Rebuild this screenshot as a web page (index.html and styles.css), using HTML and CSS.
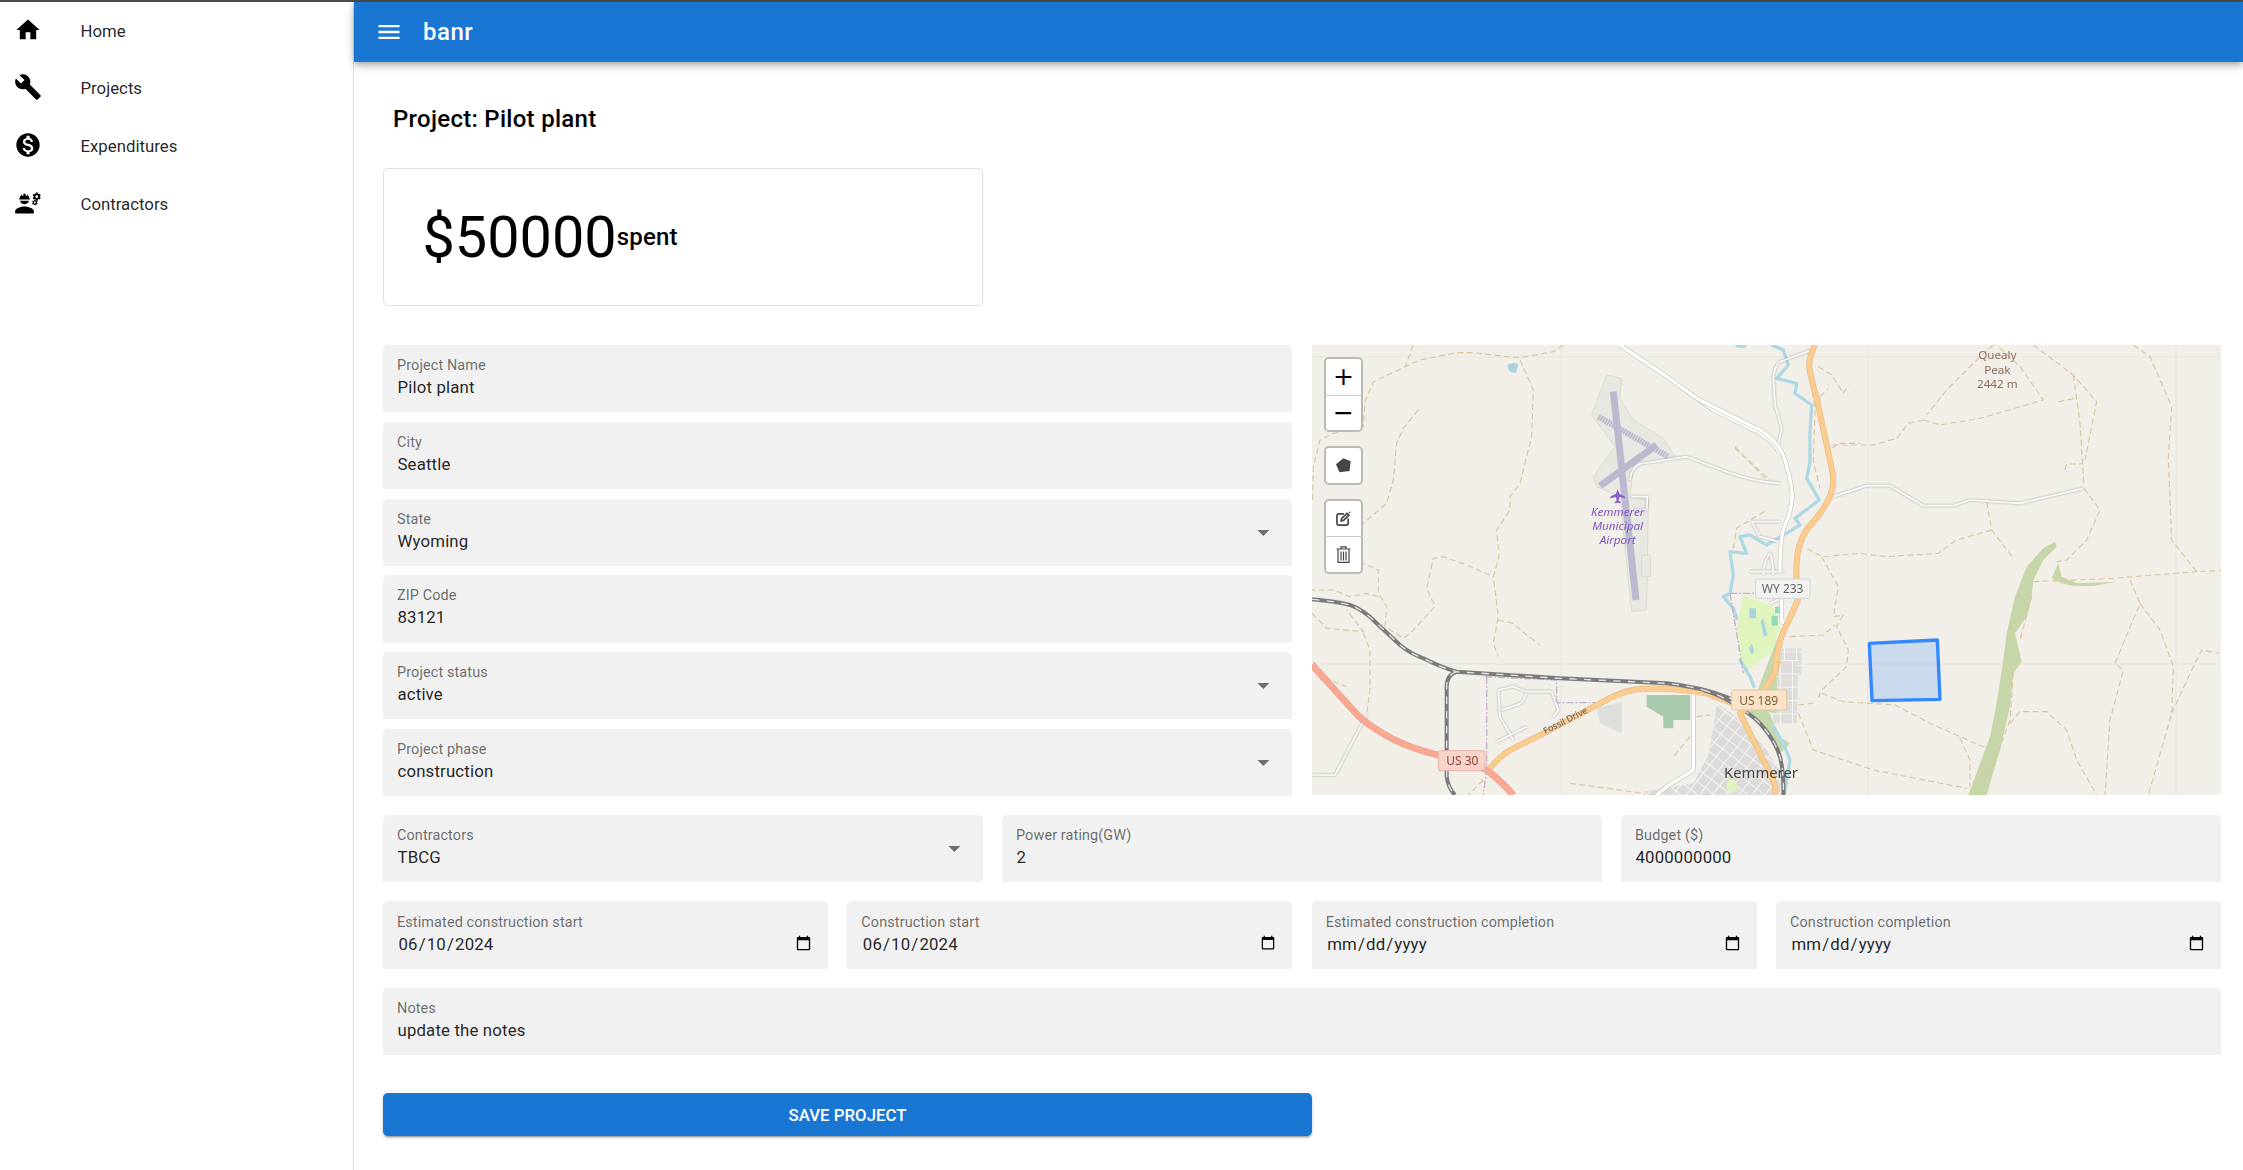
FILE: index.html
```html
<!DOCTYPE html>
<html lang="en">
<head>
<meta charset="utf-8">
<title>banr</title>
<link rel="stylesheet" href="styles.css">
</head>
<body>
<div class="app">
  <aside class="sidebar">
    <nav class="nav">
      <a class="nav-item"><svg class="icon" viewBox="0 0 24 24"><path d="M10 20v-6h4v6h5v-8h3L12 3 2 12h3v8z"/></svg><span>Home</span></a>
      <a class="nav-item"><svg class="icon" viewBox="0 0 24 24"><path d="M22.7 19l-9.1-9.1c.9-2.3.4-5-1.5-6.9-2-2-5-2.4-7.4-1.3L9 6 6 9 1.6 4.7C.4 7.1.9 10.1 2.9 12.1c1.9 1.9 4.6 2.4 6.9 1.5l9.1 9.1c.4.4 1 .4 1.4 0l2.3-2.3c.5-.4.5-1.1.1-1.4z"/></svg><span>Projects</span></a>
      <a class="nav-item"><svg class="icon" viewBox="0 0 24 24"><path d="M12 2C6.48 2 2 6.48 2 12s4.48 10 10 10 10-4.48 10-10S17.52 2 12 2zm1.41 16.09V20h-2.67v-1.93c-1.71-.36-3.16-1.46-3.27-3.4h1.96c.1 1.05.82 1.87 2.65 1.87 1.96 0 2.4-.98 2.4-1.59 0-.83-.44-1.61-2.67-2.14-2.48-.6-4.18-1.62-4.18-3.67 0-1.72 1.39-2.84 3.11-3.21V4h2.67v1.95c1.86.45 2.79 1.86 2.85 3.39H14.3c-.05-1.11-.64-1.87-2.22-1.87-1.5 0-2.4.68-2.4 1.64 0 .84.65 1.39 2.67 1.91s4.18 1.39 4.18 3.91c-.01 1.83-1.38 2.83-3.12 3.16z"/></svg><span>Expenditures</span></a>
      <a class="nav-item"><svg class="icon" viewBox="0 0 24 24"><path d="M9 15c-2.67 0-8 1.34-8 4v2h16v-2c0-2.66-5.33-4-8-4z"/><path d="M4.74 9h8.53c.27 0 .49-.22.49-.49v-.02c0-.27-.22-.49-.49-.49H13c0-1.48-.81-2.75-2-3.45v.95c0 .28-.22.5-.5.5s-.5-.22-.5-.5V4.14C9.68 4.06 9.35 4 9 4s-.68.06-1 .14V5.5c0 .28-.22.5-.5.5S7 5.78 7 5.5v-.95C5.81 5.25 5 6.52 5 8h-.26c-.27 0-.49.22-.49.49v.03c0 .26.22.48.49.48zM9 13c1.86 0 3.41-1.28 3.86-3H5.14c.45 1.72 2 3 3.86 3z"/><path id="gear" d="M22.1 6.84c.01-.11.02-.22.02-.34 0-.12-.01-.23-.03-.34l.74-.58c.07-.05.08-.15.04-.22l-.7-1.21c-.04-.08-.14-.1-.21-.08l-.86.35c-.18-.14-.38-.25-.59-.34l-.13-.93c-.02-.08-.09-.15-.18-.15h-1.4c-.09 0-.16.07-.17.15l-.13.93c-.21.09-.41.21-.59.34l-.87-.35c-.08-.03-.17 0-.21.08l-.7 1.21c-.04.08-.03.17.04.22l.74.58c-.02.11-.03.23-.03.34 0 .11.01.23.03.34l-.74.58c-.07.05-.08.15-.04.22l.7 1.21c.04.08.14.1.21.08l.87-.35c.18.14.38.25.59.34l.13.93c.01.08.08.15.17.15h1.4c.09 0 .16-.07.17-.15l.13-.93c.21-.09.41-.21.59-.34l.87.35c.08.03.17 0 .21-.08l.7-1.21c.04-.08.03-.17-.04-.22l-.73-.58zm-2.6.91c-.69 0-1.25-.56-1.25-1.25s.56-1.25 1.25-1.25 1.25.56 1.25 1.25-.56 1.25-1.25 1.25z"/><use href="#gear" transform="translate(4.6 7.2) scale(.68)"/></svg><span>Contractors</span></a>
    </nav>
  </aside>
  <div class="page">
    <header class="topbar">
      <svg class="icon icon-menu" viewBox="0 0 24 24"><path d="M3 18h18v-2H3v2zm0-5h18v-2H3v2zm0-7v2h18V6H3z"/></svg>
      <div class="brand">banr</div>
    </header>
    <main class="content">
      <h1 class="title">Project: Pilot plant</h1>
      <section class="spent-card">
        <span class="spent-amount">$50000</span><span class="spent-label">spent</span>
      </section>
      <form class="form">
        <div class="split">
          <div class="stack">
            <label class="field"><span class="field-body"><span class="field-label">Project Name</span><input class="field-input" value="Pilot plant"></span></label>
            <label class="field"><span class="field-body"><span class="field-label">City</span><input class="field-input" value="Seattle"></span></label>
            <div class="field"><span class="field-body"><span class="field-label">State</span><span class="field-value">Wyoming</span></span><svg class="arrow" viewBox="0 0 24 24"><path d="M7 10l5 5 5-5z"/></svg></div>
            <label class="field"><span class="field-body"><span class="field-label">ZIP Code</span><input class="field-input" value="83121"></span></label>
            <div class="field"><span class="field-body"><span class="field-label">Project status</span><span class="field-value">active</span></span><svg class="arrow" viewBox="0 0 24 24"><path d="M7 10l5 5 5-5z"/></svg></div>
            <div class="field"><span class="field-body"><span class="field-label">Project phase</span><span class="field-value">construction</span></span><svg class="arrow" viewBox="0 0 24 24"><path d="M7 10l5 5 5-5z"/></svg></div>
          </div>
          <div class="map">
            <svg class="map-art" viewBox="0 0 909 450" width="909" height="450">
              <defs>
                <pattern id="grid1" width="31" height="31" patternUnits="userSpaceOnUse" patternTransform="rotate(38)"><rect width="31" height="31" fill="#dcdbd9"/><path d="M0 0H31M0 0V31" class="grid-line"/></pattern>
                <pattern id="grid2" width="36" height="40" patternUnits="userSpaceOnUse"><rect width="36" height="40" fill="#dedddb"/><path d="M0 0H36M0 0V40" class="grid-line"/></pattern>
              </defs>
              <rect width="909" height="450" class="m-bg"/>
              <path class="m-seam" d="M249 0V450M556 0V450M864 0V450M0 12H909M0 319H909"/>
              <g transform="translate(388 0) scale(.33333)">
                <path class="m-park" d="M130 750L220 785L240 850L215 920L130 985L110 850Z"/>
                <path class="m-green2" d="M225 785h15v20h-15zM215 812h18v30h-18z"/>
                <path class="m-grid2" d="M240 910H305V990H225Z"/>
                <path class="m-water-a" d="M148 790h20v30h-20zM190 820l12 50-10 5-10-45zM155 895l8 25-8 10-8-20z"/>
              </g>
              <g transform="translate(348 315) scale(.33333)">
                <path class="m-green3" d="M250 130L320 140L360 230L390 250L360 280L300 190Z"/>
                <path class="m-grid1" d="M170 130L230 170L320 270L370 350L365 405H-50V395L100 370L145 285L160 200Z"/>
                <path class="m-grid2" d="M340 0H415L410 190H340Z"/>
                <ellipse class="m-park" cx="215" cy="378" rx="16" ry="20"/>
              </g>
              <g transform="translate(-12 -5) scale(.33333)">
                <path class="m-forest" d="M1040 1065H1170V1140H1120V1165H1090V1130L1040 1100Z"/>
                <path class="m-gray" d="M890 1105L965 1085V1180L900 1150Z"/>
                <path class="m-water-a" d="M622 75Q640 65 655 72L648 98Q625 102 622 75Z"/>
                <path class="m-green3" d="M1430 900L1430 1120L1350 1110Z"/>
                <path class="m-air" d="M920 105L965 115L960 175L1000 240L1090 295L1125 350L1000 380L990 470L1045 480L1040 810L995 815L975 620L960 470L890 440L880 410L945 320L875 225Z"/>
                <path class="m-air" d="M1025 645H1052V710H1025Z"/>
                <path class="m-rway-d" d="M895 230L1105 350"/>
                <path class="m-rway" d="M940 155L1008 780M900 438L1070 315"/>
                <path class="m-minor" d="M990 420Q995 380 1020 372L1160 350L1280 395Q1360 425 1440 430M995 470H1042L1040 510H1005"/>
                <path class="m-plane" d="M953 448l5 13 17 9v5l-17-4-2 11 6 5v3l-9-2-9 2v-3l6-5-2-11-17 4v-5l17-9z"/>
              </g>
              <g transform="translate(468 -5) scale(.33333)">
                <path class="m-forest2" d="M825 605L830 620L790 660L760 720L755 770L740 830L705 880L725 965L700 1000L690 1100L660 1230L620 1365H565L630 1190L650 1090L670 960L680 880L705 770L740 680L790 625Z"/>
                <path class="m-forest2" d="M815 715L835 670L845 710L890 730L1010 725L940 738L880 738L845 730Z"/>
              </g>
              <g transform="translate(388 0) scale(.33333)">
                <path class="m-river" d="M110 0Q120 8 135 2M215 0L250 15L265 60L230 100L290 115L285 145L335 180L330 260L330 350L320 400L358 465L285 520L300 540L200 600L150 570L120 575L140 625L90 620L100 690L90 745L70 755L100 790L110 820"/>
              </g>
              <g transform="translate(348 315) scale(.33333)">
                <path class="m-river" d="M240 0L270 50L282 80M340 200L370 250L390 300L372 405"/>
              </g>
              <g transform="translate(-12 -5) scale(.33333)" class="m-dash">
                <path d="M340 15L315 80M790 15L760 35L680 50L640 52L520 38L470 38L360 60L220 125L195 185L190 260L100 280L60 300L40 380L38 480"/>
                <path d="M355 210L310 265L290 310L280 420L260 490L190 550L150 600L110 640L190 670L235 690L235 760L260 800L255 860L310 895L340 870L405 800L380 745L400 655L430 650L500 675L580 710"/>
                <path d="M660 60L700 150L695 290L660 430L630 470L630 510L590 570L597 650L580 710L595 830L580 910L595 950M595 840L640 850L680 885L720 915"/>
                <path d="M235 770L200 760L150 770L100 750L36 750M36 820L80 865L190 875L140 810M190 880L210 930L210 1050L200 1120M40 965L90 1020L140 1040"/>
                <path d="M1305 320L1400 420M1170 1190L1120 1250M810 1330L1030 1360M550 1320L505 1365M1190 1130L1230 1125"/>
              </g>
              <g transform="translate(388 0) scale(.33333)" class="m-dash">
                <path d="M105 310L210 405M100 610L110 550L200 495M330 85L345 200L340 350L360 430M355 65L395 90L430 145L445 120M360 155L385 130M395 310L420 295H480"/>
              </g>
              <g transform="translate(468 -5) scale(.33333)" class="m-dash">
                <path d="M640 15L600 50L500 150L440 225M430 240L385 250L350 295L280 315L155 315M430 240L480 255L600 235L790 180L720 80L650 15"/>
                <path d="M760 15L880 105L950 185L915 360M880 105L900 250L912 440M835 185L885 175M855 390L860 372L910 372"/>
                <path d="M1060 15L1110 50L1175 200L1165 350L1175 600L1250 695L1323 692M912 445L960 510L920 600L860 660L830 665"/>
                <path d="M620 485L635 570L700 655M635 570L530 600L475 640L320 650L240 640L125 650L80 625M125 650L175 740L160 830L190 825L170 860L205 930L200 980L120 1055L115 1085"/>
                <path d="M125 1060L190 1085L345 1095L450 1150L620 1225M30 890L130 885L165 855M55 1095L110 1088M55 1120L100 1230L280 1290L560 1345M540 1195L570 1260L570 1340"/>
                <path d="M760 725L1000 715L1250 695M755 770L720 900M700 1000L690 1140L630 1300M690 1150L720 1115L800 1115L860 1170L890 1260L950 1365"/>
                <path d="M1050 720L1080 790L1005 970L1030 990L990 1140L975 1365M1080 790L1140 870L1180 980L1175 1120L1105 1365M1175 1120L1240 980L1265 930L1315 940"/>
              </g>
              <g transform="translate(-12 -5) scale(.33333)">
                <path class="m-admin" d="M555 1010L770 1020V1088H890M560 1010V1290L550 1365M1290 760H1370M1290 760L1330 1000"/>
                <path class="m-minor" d="M595 1050L640 1040L680 1055L755 1055L775 1110L760 1130M595 1050L600 1130L640 1200M605 1110L665 1090L680 1060M590 1205L680 1160M36 1305H105L200 1125"/>
                <path class="m-road-c" d="M960 15L1100 110L1240 210L1380 280Q1420 305 1440 340M1180 1060V1290L1100 1340L1070 1365"/>
                <path class="m-road-w" d="M960 15L1100 110L1240 210L1380 280Q1420 305 1440 340M1180 1060V1290L1100 1340L1070 1365"/>
              </g>
              <g transform="translate(388 0) scale(.33333)">
                <path class="m-minor" d="M335 15L240 50Q220 70 220 100L225 180L245 250L235 295M155 530H240M155 530L180 575L235 590M150 680H250M210 625Q190 650 190 690M210 625Q220 650 220 690M210 775L245 760"/>
                <path class="m-road-c" d="M0 165L100 215L185 258Q225 285 245 320Q270 380 277 450Q275 500 255 540Q240 570 240 680M245 760V830L255 835"/>
                <path class="m-road-w" d="M0 165L100 215L185 258Q225 285 245 320Q270 380 277 450Q275 500 255 540Q240 570 240 680M245 760V830L255 835"/>
              </g>
              <g transform="translate(468 -5) scale(.33333)">
                <path class="m-minor" d="M160 470L260 437L330 437L430 497L520 497L570 480L720 490L910 445"/>
              </g>
              <g transform="translate(-12 -5) scale(.33333)">
                <path class="m-salmon-c" d="M36 975L170 1122Q200 1155 280 1198Q340 1228 415 1245Q500 1265 560 1290Q600 1320 640 1365"/>
                <path class="m-salmon" d="M36 975L170 1122Q200 1155 280 1198Q340 1228 415 1245Q500 1265 560 1290Q600 1320 640 1365"/>
                <path class="m-orange-c" d="M570 1285Q600 1245 650 1220L730 1180L900 1090Q960 1055 1010 1048Q1100 1040 1220 1060L1300 1090"/>
                <path class="m-orange" d="M570 1285Q600 1245 650 1220L730 1180L900 1090Q960 1055 1010 1048Q1100 1040 1220 1060L1300 1090"/>
                <path class="m-rail" d="M36 778Q110 785 150 795Q190 810 225 845L300 915Q330 940 370 955Q430 985 470 995L780 1015L1100 1030Q1200 1040 1290 1075M470 995Q440 1005 440 1040V1310Q445 1345 465 1365"/>
                <path class="m-rail-d" d="M36 778Q110 785 150 795Q190 810 225 845L300 915Q330 940 370 955Q430 985 470 995L780 1015L1100 1030Q1200 1040 1290 1075M470 995Q440 1005 440 1040V1310Q445 1345 465 1365"/>
              </g>
              <g transform="translate(348 315) scale(.33333)">
                <path class="m-rail" d="M130 90Q180 105 220 130Q270 160 300 190Q345 240 360 290Q372 340 370 405"/>
                <path class="m-rail-d" d="M130 90Q180 105 220 130Q270 160 300 190Q345 240 360 290Q372 340 370 405"/>
                <path class="m-orange-c" d="M355 0Q345 40 330 65Q290 120 240 160L290 260L335 350Q350 380 345 405"/>
                <path class="m-orange" d="M355 0Q345 40 330 65Q290 120 240 160L290 260L335 350Q350 380 345 405"/>
              </g>
              <g transform="translate(388 0) scale(.33333)">
                <path class="m-orange-c" d="M345 0Q325 40 328 70Q335 110 350 160L395 370Q405 410 392 450Q375 490 340 530Q300 570 292 630Q285 700 295 760Q280 800 250 860Q228 910 225 990"/>
                <path class="m-orange" d="M345 0Q325 40 328 70Q335 110 350 160L395 370Q405 410 392 450Q375 490 340 530Q300 570 292 630Q285 700 295 760Q280 800 250 860Q228 910 225 990"/>
              </g>
              <g transform="translate(-12 -5) scale(.33333)" class="m-text">
                <text class="t-air" x="953" y="527">Kemmerer</text>
                <text class="t-air" x="953" y="570">Municipal</text>
                <text class="t-air" x="953" y="613">Airport</text>
                <text class="t-road" transform="translate(800 1150) rotate(-27)">Fossil Drive</text>
                <rect class="s-us30" x="415" y="1232" width="140" height="60" rx="6"/>
                <text class="t-us30" x="487" y="1276">US 30</text>
              </g>
              <g transform="translate(468 -5) scale(.33333)" class="m-text">
                <text class="t-peak" x="652" y="58">Quealy</text>
                <text class="t-peak" x="652" y="101">Peak</text>
                <text class="t-peak" x="652" y="145">2442 m</text>
              </g>
              <g transform="translate(388 0) scale(.33333)" class="m-text">
                <rect class="s-wy" x="167" y="702" width="163" height="58" rx="6"/>
                <text class="t-wy" x="248" y="743">WY 233</text>
              </g>
              <g transform="translate(348 315) scale(.33333)" class="m-text">
                <rect class="s-us189" x="215" y="90" width="165" height="60" rx="6"/>
                <text class="t-us189" x="296" y="134">US 189</text>
                <text class="t-town" x="192" y="355">Kemmerer</text>
              </g>
              <g transform="translate(468 -5) scale(.33333)">
                <path class="m-shape" d="M268 910L472 900L480 1078L276 1082Z"/>
              </g>
            </svg>
            <div class="map-controls">
              <div class="ctl-group">
                <a class="ctl-btn ctl-zoom">+</a>
                <a class="ctl-btn ctl-zoom">&#8722;</a>
              </div>
              <div class="ctl-group">
                <a class="ctl-btn"><svg class="ctl-icon" viewBox="0 0 15 15"><path class="ctl-fill" d="M7.3.3L14.6 3.2 13.6 12.9 3.5 14.3 0 6.3Z"/></svg></a>
              </div>
              <div class="ctl-group">
                <a class="ctl-btn"><svg class="ctl-icon" viewBox="0 0 16 16"><path class="ctl-line" d="M8.5 3H3.2Q1 3 1 5.2V12.8Q1 15 3.2 15H10.8Q13 15 13 12.8V8"/><path class="ctl-line" d="M5.5 10.5L6 8 11.8 2.5 13.8 4.5 8 10Z"/><path class="ctl-fill" d="M14.5 0l.4 1.1 1.1.4-1.1.4-.4 1.1-.4-1.1-1.1-.4 1.1-.4z"/></svg></a>
                <a class="ctl-btn"><svg class="ctl-icon ctl-trash" viewBox="0 0 15 17"><path class="ctl-thin" d="M.5 3H14.5M5 3V.8H10V3M2 3V16.3H13V3M5 5.5V14.5M7.5 5.5V14.5M10 5.5V14.5"/></svg></a>
              </div>
            </div>
          </div>
        </div>
        <div class="row-three">
          <div class="field"><span class="field-body"><span class="field-label">Contractors</span><span class="field-value">TBCG</span></span><svg class="arrow" viewBox="0 0 24 24"><path d="M7 10l5 5 5-5z"/></svg></div>
          <label class="field"><span class="field-body"><span class="field-label">Power rating(GW)</span><input class="field-input" value="2"></span></label>
          <label class="field"><span class="field-body"><span class="field-label">Budget ($)</span><input class="field-input" value="4000000000"></span></label>
        </div>
        <div class="row-four">
          <label class="field field-date"><span class="field-body"><span class="field-label">Estimated construction start</span><input class="field-input" type="date" value="2024-06-10"></span></label>
          <label class="field field-date"><span class="field-body"><span class="field-label">Construction start</span><input class="field-input" type="date" value="2024-06-10"></span></label>
          <label class="field field-date"><span class="field-body"><span class="field-label">Estimated construction completion</span><input class="field-input" type="date"></span></label>
          <label class="field field-date"><span class="field-body"><span class="field-label">Construction completion</span><input class="field-input" type="date"></span></label>
        </div>
        <label class="field"><span class="field-body"><span class="field-label">Notes</span><input class="field-input" value="update the notes"></span></label>
        <button class="save" type="button">Save Project</button>
      </form>
    </main>
  </div>
</div>
</body>
</html>
```
FILE: styles.css
```css
* { box-sizing: border-box; }
html, body { margin: 0; height: 100%; }
body {
  font-family: Roboto, "Liberation Sans", sans-serif;
  color: rgba(0, 0, 0, .87);
  background: #fff;
  overflow: hidden;
}
.app {
  display: flex;
  height: 100%;
  border-top: 2px solid #4d4d4d;
}
.sidebar {
  width: 354px;
  flex: none;
  border-right: 1px solid #e0e0e0;
}
.nav { display: flex; flex-direction: column; }
.nav-item {
  display: flex;
  align-items: center;
  height: 57.6px;
  padding-left: 14px;
  font-size: 16.8px;
  color: rgba(0, 0, 0, .87);
}
.icon { width: 28px; height: 28px; flex: none; fill: #000; }
.nav-item .icon { margin-right: 38.5px; margin-top: -2px; }
.page { flex: 1; min-width: 0; display: flex; flex-direction: column; }
.topbar {
  height: 60px;
  flex: none;
  display: flex;
  align-items: center;
  padding-left: 21px;
  background: #1976d2;
  color: #fff;
  box-shadow: 0 2px 5px -1px rgba(0,0,0,.2), 0 5px 8px 0 rgba(0,0,0,.14), 0 1px 12px 0 rgba(0,0,0,.12);
}
.icon-menu { fill: #fff; margin-right: 20px; }
.brand { font-size: 24px; font-weight: 500; letter-spacing: .5px; }
.content { padding: 38px 22px 0 29px; }
.title {
  margin: 0 0 30px;
  padding-left: 10px;
  font-size: 24px;
  line-height: 38px;
  font-weight: 500;
  letter-spacing: .28px;
  color: #000;
}
.spent-card {
  width: 600px;
  height: 137.5px;
  display: flex;
  align-items: center;
  padding: 1px 0 0 38.5px;
  border: 1px solid #e0e0e0;
  border-radius: 4.8px;
  color: #000;
}
.spent-amount { font-size: 57.6px; font-weight: 400; }
.spent-label { font-size: 24px; font-weight: 500; letter-spacing: .18px; }
.form { margin-top: 39.5px; display: flex; flex-direction: column; gap: 18.9px; }
.split { display: grid; grid-template-columns: 909px 909px; column-gap: 20px; }
.stack { display: flex; flex-direction: column; gap: 9.6px; }
.field {
  display: flex;
  align-items: center;
  height: 67.2px;
  padding: 0 14px;
  background: #f1f1f1;
  border-radius: 4.8px 4.8px 0 0;
}
.field-date { height: 68px; }
.field-body { flex: 1; min-width: 0; display: flex; flex-direction: column; }
.field-label {
  font-size: 14.4px;
  line-height: 17px;
  margin-top: -2px;
  letter-spacing: .13px;
  color: rgba(0, 0, 0, .58);
}
.field-value, .field-input {
  display: block;
  height: 22px;
  margin-top: 2px;
  padding: 0 0 0 .5px;
  border: 0;
  outline: 0;
  background: transparent;
  font-family: inherit;
  font-size: 16.8px;
  line-height: 22px;
  letter-spacing: .16px;
  color: rgba(0, 0, 0, .87);
  width: 100%;
}
.arrow { width: 28.8px; height: 28.8px; flex: none; fill: rgba(0, 0, 0, .54); }
.map { position: relative; height: 450px; overflow: hidden; }
.map-art { display: block; filter: blur(.45px); }
.map-controls {
  position: absolute;
  top: 12px;
  left: 12px;
  display: flex;
  flex-direction: column;
  gap: 13.5px;
}
.ctl-group {
  width: 39px;
  display: flex;
  flex-direction: column;
  background: #fff;
  border: 2px solid #bcbab5;
  border-radius: 4.8px;
}
.ctl-btn {
  height: 35.5px;
  display: flex;
  align-items: center;
  justify-content: center;
}
.ctl-btn + .ctl-btn { border-top: 1px solid #ccc; }
.ctl-zoom {
  font-family: "DejaVu Sans", sans-serif;
  font-size: 25px;
  font-weight: 400;
  color: #000;
}
.ctl-icon { width: 15px; height: 15px; }
.ctl-trash { height: 17px; }
.ctl-fill { fill: #464646; }
.ctl-line { fill: none; stroke: #464646; stroke-width: 1.8; }
.ctl-thin { fill: none; stroke: #444; stroke-width: 1.2; }
.row-three { display: grid; grid-template-columns: repeat(3, 600px); column-gap: 19px; }
.row-four { display: grid; grid-template-columns: repeat(4, 445px); column-gap: 19.33px; }
.save {
  width: 929px;
  height: 43.2px;
  margin-top: 19px;
  border: 0;
  border-radius: 4.8px;
  background: #1976d2;
  color: #fff;
  font-family: inherit;
  font-size: 16.8px;
  font-weight: 500;
  letter-spacing: .03px;
  text-transform: uppercase;
  box-shadow: 0 3px 1px -2px rgba(0,0,0,.2), 0 2px 2px 0 rgba(0,0,0,.14), 0 1px 5px 0 rgba(0,0,0,.12);
}

/* map artwork */
.m-bg { fill: #f2efe9; }
.m-seam { fill: none; stroke: #e8e5df; stroke-width: 1; }
.m-park { fill: #dff5bd; }
.m-green2 { fill: #8fdcb4; }
.m-green3 { fill: #c4d8ae; }
.m-grid1 { fill: url(#grid1); }
.m-grid2 { fill: url(#grid2); }
.grid-line { fill: none; stroke: #f6f5f3; stroke-width: 6; }
.m-forest { fill: #a9cbab; }
.m-gray { fill: #dedede; }
.m-forest2 { fill: #c7d6a8; }
.m-water-a { fill: #a8d4e0; }
.m-river { fill: none; stroke: #aed8e4; stroke-width: 10; stroke-linejoin: round; stroke-linecap: round; }
.m-air { fill: #e9e7e1; stroke: #dedbc9; stroke-width: 3; }
.m-rway { fill: none; stroke: #bbb9d0; stroke-width: 21; }
.m-rway-d { fill: none; stroke: #bcbad1; stroke-width: 18; stroke-dasharray: 6 2; }
.m-plane { fill: #8461c4; }
.m-dash path { fill: none; stroke: #d9c4a0; stroke-width: 3.4; stroke-dasharray: 18 10; stroke-linejoin: round; }
.m-admin { fill: none; stroke: #c5aecb; stroke-width: 4; stroke-dasharray: 22 6 5 6; }
.m-minor { fill: none; stroke: #fff; stroke-width: 5; stroke-linejoin: round; filter: drop-shadow(0 0 3px #999); }
.m-road-c { fill: none; stroke: #c9c6c0; stroke-width: 14; stroke-linejoin: round; }
.m-road-w { fill: none; stroke: #fff; stroke-width: 10; stroke-linejoin: round; }
.m-salmon-c { fill: none; stroke: #ec9f8d; stroke-width: 20; stroke-linejoin: round; }
.m-salmon { fill: none; stroke: #f9a892; stroke-width: 16; stroke-linejoin: round; }
.m-orange-c { fill: none; stroke: #e6bb80; stroke-width: 18; stroke-linejoin: round; }
.m-orange { fill: none; stroke: #fbcc90; stroke-width: 14; stroke-linejoin: round; }
.m-rail { fill: none; stroke: #7a7a7a; stroke-width: 12; stroke-linejoin: round; }
.m-rail-d { fill: none; stroke: #e4e4e4; stroke-width: 4; stroke-dasharray: 22 22; stroke-linejoin: round; }
.m-shape { fill: #3388ff; fill-opacity: .2; stroke: #3388ff; stroke-width: 10; stroke-linejoin: round; }
.m-text text { font-family: "Noto Sans", "Open Sans", sans-serif; text-anchor: middle; }
.t-air { font-size: 35px; font-style: italic; fill: #7e58c0; }
.t-road { font-size: 27px; fill: #555; }
.t-peak { font-size: 35px; fill: #8a6e5c; }
.t-us30 { font-size: 36px; fill: #8a4238; }
.t-wy { font-size: 36px; fill: #666; }
.t-us189 { font-size: 36px; fill: #7a5f3a; }
.m-text .t-town { font-size: 44.5px; fill: #444; text-anchor: start; }
.s-us30 { fill: #f8d3c9; stroke: #e8b3a7; stroke-width: 3; }
.s-wy { fill: #f2f2f2; stroke: #d4d4d4; stroke-width: 3; }
.s-us189 { fill: #fae3c8; stroke: #e2c69f; stroke-width: 3; }
```
